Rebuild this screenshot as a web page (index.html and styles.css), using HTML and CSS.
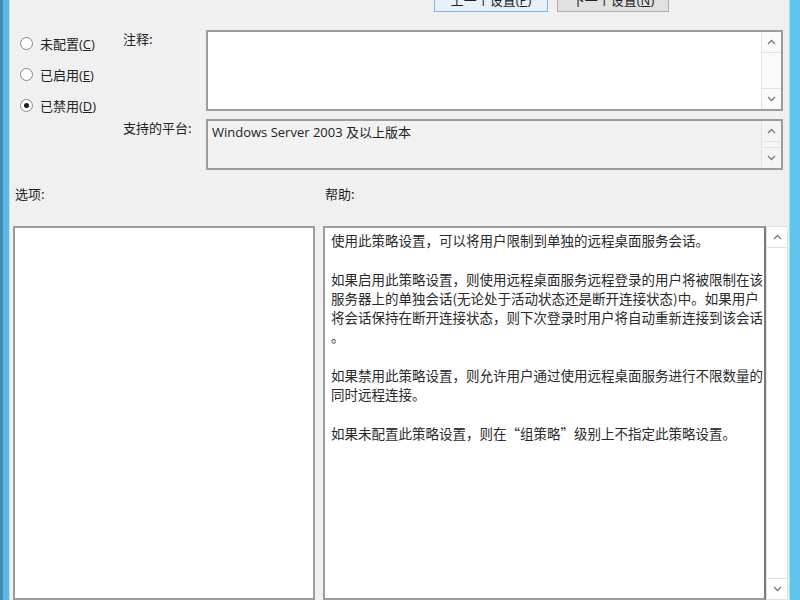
FILE: index.html
```html
<!DOCTYPE html>
<html lang="zh-CN">
<head>
  <meta charset="UTF-8">
  <title>将远程桌面服务用户限制到单独的远程桌面服务会话</title>
  <link rel="stylesheet" href="styles.css">
</head>
<body>
  <div class="window">
    <div class="edge edge-left"></div>

    <div class="content">
      <div class="topbar">
        <div class="title">将远程桌面服务用户限制到单独的远程桌面服务会话</div>
        <div class="nav-buttons">
          <button class="btn btn-hot">上一个设置(<u>P</u>)</button>
          <button class="btn">下一个设置(<u>N</u>)</button>
        </div>
      </div>

      <div class="settings">
        <div class="states">
          <label class="radio"><span class="radio-mark"></span><span>未配置(<u>C</u>)</span></label>
          <label class="radio"><span class="radio-mark"></span><span>已启用(<u>E</u>)</span></label>
          <label class="radio"><span class="radio-mark checked"></span><span>已禁用(<u>D</u>)</span></label>
        </div>

        <div class="field-label">注释:</div>
        <div class="box box-comment">
          <div class="box-body"></div>
          <div class="scrollbar">
            <span class="arrow"><svg width="9" height="6" viewBox="0 0 9 6"><polyline points="1,5 4.5,1.5 8,5" fill="none" stroke="#7a7a7a" stroke-width="1.3"/></svg></span>
            <span class="track"></span>
            <span class="arrow"><svg width="9" height="6" viewBox="0 0 9 6"><polyline points="1,1 4.5,4.5 8,1" fill="none" stroke="#7a7a7a" stroke-width="1.3"/></svg></span>
          </div>
        </div>

        <div class="field-label">支持的平台:</div>
        <div class="box box-platform">
          <div class="box-body platform-text">Windows Server 2003 及以上版本</div>
          <div class="scrollbar">
            <span class="arrow"><svg width="9" height="6" viewBox="0 0 9 6"><polyline points="1,5 4.5,1.5 8,5" fill="none" stroke="#7a7a7a" stroke-width="1.3"/></svg></span>
            <span class="track"></span>
            <span class="arrow"><svg width="9" height="6" viewBox="0 0 9 6"><polyline points="1,1 4.5,4.5 8,1" fill="none" stroke="#7a7a7a" stroke-width="1.3"/></svg></span>
          </div>
        </div>
      </div>

      <div class="panes">
        <div class="pane">
          <div class="pane-title">选项:</div>
          <div class="box options-box"></div>
        </div>

        <div class="pane">
          <div class="pane-title">帮助:</div>
          <div class="help">
            <div class="help-text">
              <p>使用此策略设置，可以将用户限制到单独的远程桌面服务会话。</p>
              <p>如果启用此策略设置，则使用远程桌面服务远程登录的用户将被限制在该<br>服务器上的单独会话(无论处于活动状态还是断开连接状态)中。如果用户<br>将会话保持在断开连接状态，则下次登录时用户将自动重新连接到该会话<br>。</p>
              <p>如果禁用此策略设置，则允许用户通过使用远程桌面服务进行不限数量的<br>同时远程连接。</p>
              <p>如果未配置此策略设置，则在“组策略”级别上不指定此策略设置。</p>
            </div>
            <div class="scrollbar help-scroll">
              <span class="arrow"><svg width="9" height="6" viewBox="0 0 9 6"><polyline points="1,5 4.5,1.5 8,5" fill="none" stroke="#7a7a7a" stroke-width="1.3"/></svg></span>
              <span class="track"></span>
              <span class="arrow"><svg width="9" height="6" viewBox="0 0 9 6"><polyline points="1,1 4.5,4.5 8,1" fill="none" stroke="#7a7a7a" stroke-width="1.3"/></svg></span>
            </div>
          </div>
        </div>
      </div>
    </div>

    <div class="edge edge-right"></div>
  </div>
</body>
</html>
```

FILE: styles.css
```css
:root {
  --bg: #f0f0f0;
  --text: #222;
  --frame-blue: #5bb8df;
  --box-border: #9c9c9c;
  --scroll-line: #e2e2e2;
}

html, body {
  margin: 0;
  height: 100%;
  overflow: hidden;
}

body {
  background: var(--bg);
  color: var(--text);
  font-family: "Open Sans", "Noto Sans CJK SC", sans-serif;
  font-size: 13px;
}

.window {
  display: flex;
  height: 600px;
}

/* window frame */
.edge {
  flex: none;
}

.edge-left {
  width: 10px;
  background: linear-gradient(to right, #3f8fb4 0, #3f8fb4 3px, var(--frame-blue) 3px, var(--frame-blue) 9px, #bfe3f3 9px);
}

.edge-right {
  width: 11px;
  background: linear-gradient(to right, #a9def2 0, #a9def2 1px, #60c5ea 1px);
}

.content {
  flex: 1;
  display: flex;
  flex-direction: column;
  min-width: 0;
}

/* top row, mostly scrolled above the view */
.topbar {
  display: flex;
  height: 24px;
  margin-top: -12px;
}

.title {
  padding-left: 5px;
  width: 419px;
  margin-top: -4px;
  font-family: "Noto Sans CJK SC", sans-serif;
  font-size: 13.5px;
  line-height: 14px;
  height: 16px;
  color: #555;
  white-space: nowrap;
  overflow: hidden;
}

.nav-buttons {
  display: flex;
  gap: 9px;
}

.btn {
  font-family: "Open Sans", "Noto Sans CJK SC", sans-serif;
  font-size: 13px;
  color: var(--text);
  background: #e1e1e1;
  border: 1px solid #adadad;
  width: 112px;
  height: 24px;
  padding: 0;
  line-height: 22px;
}

.btn-hot {
  width: 114px;
  background: #e5f1fb;
  border-color: #7eb4ea;
}

/* state + comment + platform */
.settings {
  display: grid;
  grid-template-columns: 113px 83px 1fr;
  grid-template-rows: 81px 51px;
  row-gap: 8px;
  margin-top: 18px;
  padding-right: 6px;
}

.states {
  grid-row: 1 / span 2;
  display: flex;
  flex-direction: column;
  gap: 11px;
  padding: 3px 0 0 10px;
}

.radio {
  display: flex;
  align-items: center;
  gap: 7px;
  height: 20px;
}

.radio-mark {
  width: 11px;
  height: 11px;
  border: 1px solid #8a8a8a;
  border-radius: 50%;
  background: #fff;
  display: flex;
  align-items: center;
  justify-content: center;
}

.radio-mark.checked::after {
  content: "";
  width: 5px;
  height: 5px;
  border-radius: 50%;
  background: #1a1a1a;
}

.field-label {
  font-family: "Noto Sans CJK SC", sans-serif;
  line-height: 17px;
}

.box {
  display: flex;
  box-sizing: border-box;
  border: 2px solid var(--box-border);
  background: #fff;
}

.box-body {
  flex: 1;
}

.box-platform {
  background: #f2f2f2;
}

.platform-text {
  padding: 2px 0 0 4px;
  font-size: 13px;
  line-height: 18px;
}

/* scrollbars */
.scrollbar {
  flex: none;
  width: 19px;
  display: flex;
  flex-direction: column;
  border-left: 1px solid var(--scroll-line);
  background: #fafafa;
}

.box-platform .scrollbar {
  background: #f4f4f4;
}

.arrow {
  height: 20px;
  display: flex;
  align-items: center;
  justify-content: center;
  border-bottom: 1px solid var(--scroll-line);
}

.arrow:last-child {
  border-bottom: none;
  border-top: 1px solid var(--scroll-line);
}

.track {
  flex: 1;
}

/* options + help */
.panes {
  display: grid;
  grid-template-columns: 302px 1fr;
  column-gap: 8px;
  margin-top: 15px;
  padding: 0 1px 0 3px;
}

.pane {
  display: flex;
  flex-direction: column;
}

.pane-title {
  padding-left: 2px;
  font-family: "Noto Sans CJK SC", sans-serif;
  line-height: 18px;
  margin-bottom: 23px;
}

.options-box {
  height: 374px;
}

.help {
  display: flex;
  height: 374px;
}

.help-text {
  flex: 1;
  box-sizing: border-box;
  border: 2px solid var(--box-border);
  border-right-color: #7a7a7a;
  background: #fff;
  padding: 3px 0 0 6px;
  font-family: "Noto Sans CJK SC", sans-serif;
  font-size: 13.5px;
  line-height: 19.3px;
  color: #2a2a2a;
  white-space: nowrap;
  overflow: hidden;
}

.help-text p {
  margin: 0 0 19.3px;
}

.help-scroll {
  width: 20px;
  border: 1px solid var(--scroll-line);
  background: #fff;
}
```
